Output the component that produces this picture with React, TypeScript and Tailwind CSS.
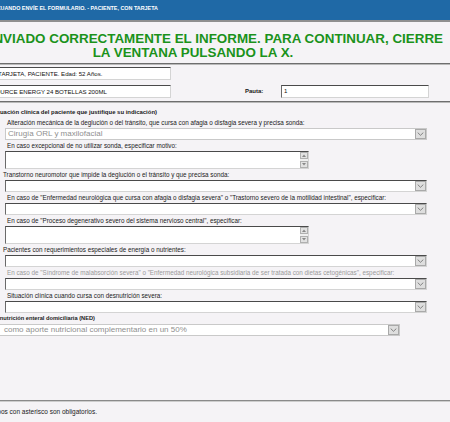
import React from "react";

const Arrow = () => (
  <div className="w-[11px] h-full flex items-center justify-center bg-[#dedede] border border-[#a9a9a9] shrink-0">
    <svg width="7" height="4" viewBox="0 0 7 4">
      <path d="M0.7 0.6 L3.5 3.3 L6.3 0.6" fill="none" stroke="#777" strokeWidth="0.9" />
    </svg>
  </div>
);

function Select({
  text = "",
  disabled = false,
  className = "",
}: {
  text?: string;
  disabled?: boolean;
  className?: string;
}) {
  return (
    <div
      className={`flex h-[12px] bg-white border ${
        disabled ? "border-[#c9c9c9]" : "border-[#d4d4d4] border-t-[#4a4a4a] border-l-[#6a6a6a]"
      } ${className}`}
    >
      <div className="flex-1 text-[8px] leading-[10px] text-[#8f8f8f] pl-[2px] whitespace-nowrap overflow-hidden">
        {text}
      </div>
      <Arrow />
    </div>
  );
}

function TextArea() {
  return (
    <div className="flex h-[18px] w-[304px] ml-[65px] bg-white border border-[#d4d4d4] border-t-[#4a4a4a] border-l-[#6a6a6a]">
      <div className="flex-1" />
      <div className="w-[8px] flex flex-col justify-between bg-[#efefef]">
        <div className="h-[7px] bg-[#e2e2e2] border border-[#b0b0b0] flex items-center justify-center">
          <svg width="4" height="3" viewBox="0 0 4 3">
            <path d="M0 3 L2 0.5 L4 3 Z" fill="#888" />
          </svg>
        </div>
        <div className="h-[7px] bg-[#e2e2e2] border border-[#b0b0b0] flex items-center justify-center">
          <svg width="4" height="3" viewBox="0 0 4 3">
            <path d="M0 0 L2 2.5 L4 0 Z" fill="#888" />
          </svg>
        </div>
      </div>
    </div>
  );
}

function Label({
  children,
  indent = 67,
  gray = false,
}: {
  children: React.ReactNode;
  indent?: 63 | 67;
  gray?: boolean;
}) {
  return (
    <div
      className={`h-[11px] leading-[11px] text-[6.3px] whitespace-nowrap ${
        indent === 63 ? "pl-[63px]" : "pl-[67px]"
      } ${gray ? "text-[#9a9a9a]" : "text-[#1a1a1a]"}`}
    >
      {children}
    </div>
  );
}

const Sep = ({ className = "" }: { className?: string }) => (
  <div className={`h-[2px] border-t border-[#6e6e6e] bg-[#b9b9b9] ${className}`} />
);

export default function App() {
  return (
    <div className="w-[450px] h-[422px] overflow-hidden bg-[#f5f3f6] font-['Liberation_Sans',Arial,sans-serif]">
      <div className="-ml-[60px] w-[510px]">
        {/* header */}
        <div className="h-[20px] bg-[#1f69a6] flex">
          <div className="w-[218px] flex justify-end shrink-0">
            <div className="whitespace-nowrap text-white font-bold text-[5.4px] leading-[17px]">
              CUANDO ENVÍE EL FORMULARIO. - PACIENTE, CON TARJETA
            </div>
          </div>
        </div>
        <div className="h-[2px] bg-[#8f8f8f]" />

        {/* message */}
        <div className="mt-[10px] font-bold text-[13.4px] leading-[14px] text-[#1b921b] whitespace-nowrap">
          <div className="w-[503px] flex justify-end">
            <div>SE HA ENVIADO CORRECTAMENTE EL INFORME. PARA CONTINUAR, CIERRE</div>
          </div>
          <div className="w-[506px] text-center">LA VENTANA PULSANDO LA X.</div>
        </div>

        <Sep className="mt-[3px]" />

        {/* patient rows */}
        <div className="mt-[2px] h-[13px] flex">
          <div className="ml-[40px] w-[191px] h-full bg-white border border-[#d4d4d4] border-t-[#4a4a4a] border-l-[#6a6a6a] text-[6.1px] leading-[11px] pl-[2px] whitespace-nowrap overflow-hidden text-[#111]">
            CON TARJETA, PACIENTE. Edad: 52 Años.
          </div>
        </div>
        <div className="mt-[5px] h-[13px] flex items-center">
          <div className="ml-[40px] w-[191px] h-full bg-white border border-[#d4d4d4] border-t-[#4a4a4a] border-l-[#6a6a6a] text-[6.1px] leading-[11px] pl-[2px] whitespace-nowrap overflow-hidden text-[#111]">
            RESOURCE ENERGY 24 BOTELLAS 200ML
          </div>
          <div className="ml-[74px] w-[36px] text-[6px] font-bold text-[#1a1a1a]">Pauta:</div>
          <div className="w-[148px] h-full bg-white border border-[#d4d4d4] border-t-[#4a4a4a] border-l-[#6a6a6a] text-[6px] leading-[11px] pl-[2px] text-[#111]">
            1
          </div>
        </div>

        <Sep className="mt-[3px]" />

        {/* section */}
        <div className="mt-[4px] w-[217px] flex justify-end h-[10px] leading-[10px]">
          <div className="whitespace-nowrap text-[5.95px] font-bold text-[#1a1a1a]">
            (Indicar patología y situación clínica del paciente que justifique su indicación)
          </div>
        </div>
        <Label>
          Alteración mecánica de la deglución o del tránsito, que cursa con afagia o disfagia severa y precisa sonda:
        </Label>
        <Select disabled text="Cirugía ORL y maxilofacial" className="ml-[65px] w-[422px]" />
        <Label>En caso excepcional de no utilizar sonda, especificar motivo:</Label>
        <TextArea />
        <Label indent={63}>
          Transtorno neuromotor que impide la deglución o el tránsito y que precisa sonda:
        </Label>
        <Select className="ml-[65px] w-[422px]" />
        <Label>
          En caso de "Enfermedad neurológica que cursa con afagia o disfagia severa" o "Trastorno severo de la
          motilidad intestinal", especificar:
        </Label>
        <Select className="ml-[65px] w-[422px]" />
        <Label>En caso de "Proceso degenerativo severo del sistema nervioso central", especificar:</Label>
        <TextArea />
        <Label indent={63}>Pacientes con requerimientos especiales de energía o nutrientes:</Label>
        <Select className="ml-[65px] w-[422px]" />
        <Label gray>
          En caso de "Síndrome de malabsorción severa" o "Enfermedad neurológica subsidiaria de ser tratada con
          dietas cetogénicas", especificar:
        </Label>
        <Select className="ml-[65px] w-[422px]" />
        <Label>Situación clínica cuando cursa con desnutrición severa:</Label>
        <Select className="ml-[65px] w-[422px]" />
        <div className="w-[155px] flex justify-end h-[11px] leading-[11px]">
          <div className="whitespace-nowrap text-[5.7px] font-bold text-[#1a1a1a]">
            Tipo de nutrición enteral domiciliaria (NED)
          </div>
        </div>
        <Select
          disabled
          text="como aporte nutricional complementario en un 50%"
          className="ml-[58px] w-[402px] pl-[3px]"
        />

        {/* footer */}
        <div className="mt-[64px] h-[2px] border-t border-[#8a8a8a] bg-[#cdcdcd]" />
        <div className="mt-[5px] w-[157px] flex justify-end h-[10px] leading-[10px]">
          <div className="whitespace-nowrap text-[6.5px] text-[#1a1a1a]">
            Los campos con asterisco son obligatorios.
          </div>
        </div>
      </div>
    </div>
  );
}
